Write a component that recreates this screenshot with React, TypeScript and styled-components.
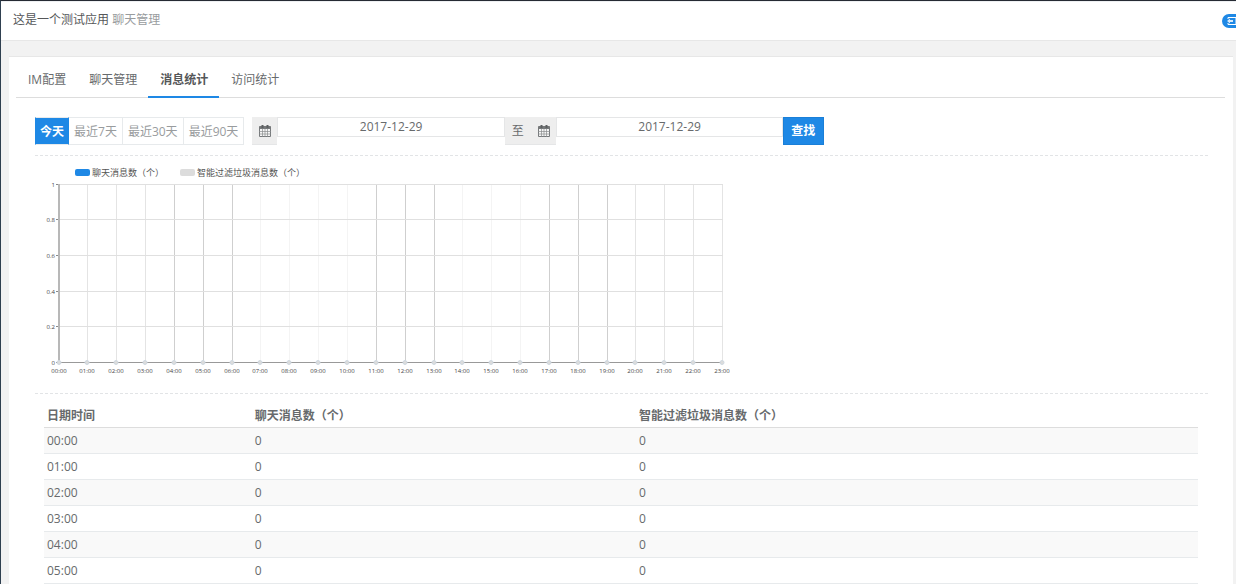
import React from "react";
import styled, { createGlobalStyle } from "styled-components";

const GlobalStyle = createGlobalStyle`
  * { box-sizing: border-box; }
  html, body { margin: 0; }
  body {
    background: #f2f2f2;
    color: #676a6c;
    font: 12px/18px "Open Sans", "Noto Sans CJK SC", sans-serif;
  }
  button, input { font: inherit; color: inherit; margin: 0; border-radius: 0; }
`;

const Page = styled.div`
  display: flex;
  flex-direction: column;
  min-height: 100vh;
  border-top: 1px solid #262a33;
  border-left: 1px solid #2f4050;
`;

const Header = styled.header`
  display: flex;
  align-items: center;
  justify-content: space-between;
  height: 40px;
  padding: 0 0 3px 12px;
  background: #fff;
  border-top: 1px solid #eef0f2;
  border-bottom: 1px solid #e7e7e7;
  overflow: hidden;
`;

const Title = styled.h1`
  margin: 0;
  font-size: 12px;
  font-weight: 400;
  color: #555759;
`;

const Muted = styled.small`
  font-size: 12px;
  color: #999c9e;
`;

const ExitButton = styled.button`
  display: flex;
  align-items: center;
  flex: none;
  width: 28px;
  height: 14px;
  margin-top: 3px;
  margin-right: -14px;
  padding: 0 5px;
  border: 0;
  background: #1e88e5;
  && { border-radius: 7px; }
`;

const Panel = styled.main`
  flex: 1;
  margin: 15px 3px 0 8px;
  padding: 0 8px 0 7px;
  background: #fff;
  border-top: 1px solid #e7e7e7;
`;

const Tabs = styled.nav`
  display: flex;
  height: 41px;
  border-bottom: 1px solid #ddd;
`;

const Tab = styled.a<{ $active?: boolean }>`
  height: 41px;
  padding: 14px 11px 0 12px;
  color: ${(p) => (p.$active ? "#555759" : "#676a6c")};
  font-weight: ${(p) => (p.$active ? 700 : 400)};
  text-decoration: none;
  border-bottom: ${(p) => (p.$active ? "2px solid #1e88e5" : "0")};
`;

const Content = styled.div`
  padding: 19px 17px 0 19px;
`;

const Filters = styled.form`
  display: flex;
  align-items: flex-start;
  gap: 8px;
  padding-bottom: 10px;
  border-bottom: 1px dashed #e2e4e6;
`;

const RangeGroup = styled.div`
  display: flex;
  flex: none;
`;

const RangeButton = styled.button<{ $active?: boolean }>`
  height: 28px;
  padding: ${(p) => (p.$active ? "1px 4px 0" : "1px 5px 0")};
  white-space: nowrap;
  background: ${(p) => (p.$active ? "#1e88e5" : "#fff")};
  color: ${(p) => (p.$active ? "#fff" : "#999c9e")};
  font-weight: ${(p) => (p.$active ? 700 : 400)};
  border: 1px solid #e7eaec;
  border-left-width: 0;
  ${(p) => (p.$active ? "border-left: 1px solid #1e88e5; border-right-color: #1e88e5;" : "")}
`;

const DateRange = styled.div`
  display: flex;
  flex: 1;
  align-items: flex-start;
  max-width: 572px;
`;

const Addon = styled.label`
  display: flex;
  align-items: center;
  gap: 14px;
  flex: none;
  height: 28px;
  padding: 0 6px 0 7px;
  background: #eee;
  border-bottom: 1px solid #e5e6e7;
`;

const DateInput = styled.input`
  flex: 1;
  min-width: 0;
  height: 20px;
  padding: 0 0 2px;
  text-align: center;
  background: #fff;
  border: 1px solid #e5e6e7;
  outline: 0;
`;

const SearchButton = styled.button`
  flex: none;
  height: 28px;
  padding: 0 8px 0 7px;
  color: #fff;
  font-weight: 700;
  background: #1e88e5;
  border: 1px solid #1a7fd8;
`;

const ChartBox = styled.section`
  height: 238px;
  border-bottom: 1px dashed #e2e4e6;
`;

const Chart = styled.svg`
  display: block;
  font-family: "Open Sans", "Noto Sans CJK SC", sans-serif;
`;

const TableBox = styled.div`
  padding: 8px 10px 0 9px;
`;

const Table = styled.table`
  width: 100%;
  table-layout: fixed;
  border-collapse: separate;
  border-spacing: 0;
  text-align: left;
`;

const HeadCell = styled.th<{ $width?: string }>`
  width: ${(p) => p.$width || "auto"};
  height: 26px;
  padding: 2px 3px 0;
  font-weight: 700;
  border-bottom: 1px solid #ddd;
`;

const Row = styled.tr`
  &:nth-child(odd) { background: #f9f9f9; }
`;

const Cell = styled.td`
  height: 26px;
  padding: 1px 3px 0;
  border-bottom: 1px solid #e7eaec;
`;

const CalendarIcon = () => (
  <svg width="12" height="12" viewBox="0 0 12 12" aria-hidden="true">
    <path d="M0.5 1.500h11v10h-11z" fill="#f6f6f6" stroke="#76797b" />
    <path d="M0.500 1.500h11v2.500h-11z" fill="#76797b" />
    <path d="M3.500 4v8M6 4v8M8.500 4v8M0 6.500h12M0 9h12" stroke="#8a8c8e" strokeWidth="0.7" fill="none" />
    <path d="M3.500 0v3M8.500 0v3" stroke="#5c5f61" strokeWidth="2" />
  </svg>
);

const ExitIcon = () => (
  <svg width="14" height="8" viewBox="0 0 14 8" aria-hidden="true">
    <path d="M1 2V.5h8v7H1V6" fill="none" stroke="#fff" />
    <path d="M0 4l3-2.500v1.500h3v2H3v1.500z" fill="#d6eafb" />
  </svg>
);

const hours = Array.from({ length: 24 }, (_, i) => `${String(i).padStart(2, "0")}:00`);
const levels = [
  { label: "1", y: 28 },
  { label: "0.8", y: 63 },
  { label: "0.6", y: 99 },
  { label: "0.4", y: 135 },
  { label: "0.2", y: 170 },
  { label: "0", y: 206 },
];
const strong = [4, 5, 6, 11, 12, 13, 17, 18, 19];
const faint = [7, 8, 9, 10, 14, 15, 16];

const xAt = (i: number) => 24 + Math.floor((i * 1327) / 46);
const lineColor = (i: number) =>
  strong.includes(i) ? "#cfcfcf" : faint.includes(i) ? "#f4f4f4" : "#e4e4e4";

const MessageChart = () => (
  <Chart width="720" height="230" role="img" aria-label="消息统计">
    <rect x="40" y="13" width="15" height="7" rx="2" fill="#1e88e5" />
    <text x="57" y="20" fontSize="9" fill="#555">聊天消息数（个）</text>
    <rect x="145" y="13" width="15" height="7" rx="2" fill="#dcdcdc" />
    <text x="162" y="20" fontSize="9" fill="#555">智能过滤垃圾消息数（个）</text>
    {hours.map((h, i) =>
      i > 0 ? <rect key={h} x={xAt(i)} y="28" width="1" height="178" fill={lineColor(i)} /> : null
    )}
    {levels.map(({ label, y }) => (
      <g key={label}>
        {y < 206 && <rect x="24" y={y} width="664" height="1" fill="#e0e0e0" />}
        <rect x="21" y={y} width="3" height="1" fill="#888" />
        <text x="20" y={y + 3} fontSize="6" textAnchor="end" fill="#444">{label}</text>
      </g>
    ))}
    <rect x="23" y="28" width="2" height="179" fill="#b8b8b8" />
    <rect x="24" y="206" width="664" height="1" fill="#999" />
    {hours.map((h, i) => (
      <g key={h}>
        <circle cx={xAt(i)} cy="206.500" r="2" fill="#dcdcdc" stroke="#cfd9e2" />
        <text x={xAt(i)} y="217" fontSize="6" textAnchor="middle" fill="#444">{h}</text>
      </g>
    ))}
  </Chart>
);

export default function App() {
  return (
    <>
      <GlobalStyle />
      <Page>
        <Header>
          <Title>这是一个测试应用 <Muted>聊天管理</Muted></Title>
          <ExitButton type="button" aria-label="退出"><ExitIcon /></ExitButton>
        </Header>
        <Panel>
          <Tabs>
            <Tab href="#config">IM配置</Tab>
            <Tab href="#chat">聊天管理</Tab>
            <Tab href="#messages" $active>消息统计</Tab>
            <Tab href="#visits">访问统计</Tab>
          </Tabs>
          <Content>
            <Filters>
              <RangeGroup>
                <RangeButton type="button" $active>今天</RangeButton>
                <RangeButton type="button">最近7天</RangeButton>
                <RangeButton type="button">最近30天</RangeButton>
                <RangeButton type="button">最近90天</RangeButton>
              </RangeGroup>
              <DateRange>
                <Addon htmlFor="from" aria-label="开始日期"><CalendarIcon /></Addon>
                <DateInput id="from" defaultValue="2017-12-29" />
                <Addon htmlFor="to">至<CalendarIcon /></Addon>
                <DateInput id="to" defaultValue="2017-12-29" />
                <SearchButton type="button">查找</SearchButton>
              </DateRange>
            </Filters>
            <ChartBox><MessageChart /></ChartBox>
            <TableBox>
              <Table>
                <thead>
                  <tr>
                    <HeadCell $width="18%">日期时间</HeadCell>
                    <HeadCell $width="33.3%">聊天消息数（个）</HeadCell>
                    <HeadCell>智能过滤垃圾消息数（个）</HeadCell>
                  </tr>
                </thead>
                <tbody>
                  {hours.slice(0, 6).map((h) => (
                    <Row key={h}><Cell>{h}</Cell><Cell>0</Cell><Cell>0</Cell></Row>
                  ))}
                </tbody>
              </Table>
            </TableBox>
          </Content>
        </Panel>
      </Page>
    </>
  );
}
